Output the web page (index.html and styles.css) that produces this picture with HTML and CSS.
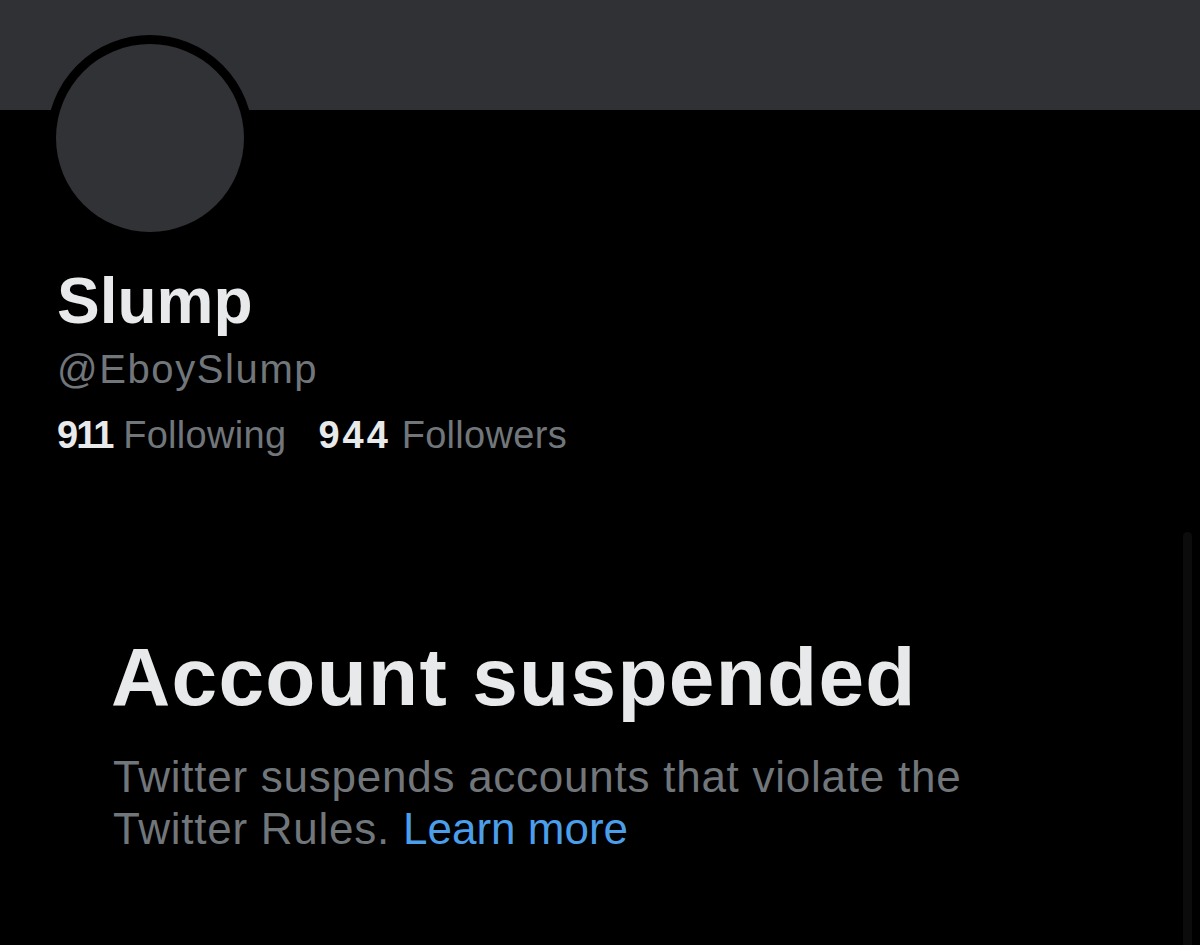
FILE: index.html
```html
<!DOCTYPE html>
<html lang="en">
<head>
<meta charset="utf-8">
<title>Slump (@EboySlump)</title>
<link rel="stylesheet" href="styles.css">
</head>
<body>
<div class="page">
  <div class="banner"></div>
  <section class="profile">
    <div class="avatar-ring"><div class="avatar"></div></div>
    <h1 class="name">Slump</h1>
    <div class="handle">@EboySlump</div>
    <div class="counts">
      <span class="count following"><b>911</b> Following</span>
      <span class="count followers"><b>944</b> Followers</span>
    </div>
  </section>
  <section class="suspended">
    <h2 class="title">Account suspended</h2>
    <p class="desc">Twitter suspends accounts that violate the Twitter Rules. <a class="link" href="#">Learn more</a></p>
  </section>
  <div class="scroll-indicator"></div>
</div>
</body>
</html>
```
FILE: styles.css
```css
html, body {
  margin: 0;
  padding: 0;
  background: #000;
}
body {
  font-family: "Liberation Sans", Arial, sans-serif;
  color: #e7e9ea;
}
.page {
  position: relative;
  width: 1200px;
  height: 945px;
  overflow: hidden;
  background: #000;
}
.banner {
  height: 110px;
  background: #2f3135;
}
.profile {
  padding-left: 57px;
}
.avatar-ring {
  width: 206px;
  height: 206px;
  box-sizing: border-box;
  border-radius: 50%;
  border: 9px solid #000;
  background: #000;
  margin-top: -75px;
  margin-left: -10px;
}
.avatar {
  width: 100%;
  height: 100%;
  border-radius: 50%;
  background: #303236;
}
.name {
  margin: 22px 0 0 0;
  font-size: 64px;
  line-height: 76px;
  font-weight: 700;
  color: #e7e9ea;
}
.handle {
  margin-top: 6px;
  font-size: 40px;
  line-height: 48px;
  letter-spacing: 1.6px;
  color: #71767b;
}
.counts {
  margin-top: 18px;
  display: flex;
  gap: 32px;
  font-size: 38px;
  line-height: 48px;
  color: #71767b;
}
.count {
  letter-spacing: 0.3px;
}
.count b {
  color: #e7e9ea;
  font-weight: 700;
}
.following b {
  letter-spacing: -2px;
}
.followers b {
  letter-spacing: 3px;
}
.suspended {
  padding-left: 113px;
  margin-top: 170px;
}
.title {
  margin: 0 0 0 -2px;
  font-size: 82px;
  line-height: 96px;
  font-weight: 700;
  letter-spacing: 1.3px;
  color: #e7e9ea;
}
.desc {
  margin: 26px 0 0 0;
  width: 900px;
  font-size: 44px;
  line-height: 52px;
  letter-spacing: 0.75px;
  color: #71767b;
}
.link {
  color: #4b9eea;
  text-decoration: none;
  letter-spacing: 0;
}
.scroll-indicator {
  position: absolute;
  left: 1183px;
  top: 532px;
  width: 9px;
  height: 430px;
  border-radius: 5px;
  background: #0c0c0c;
}
```
